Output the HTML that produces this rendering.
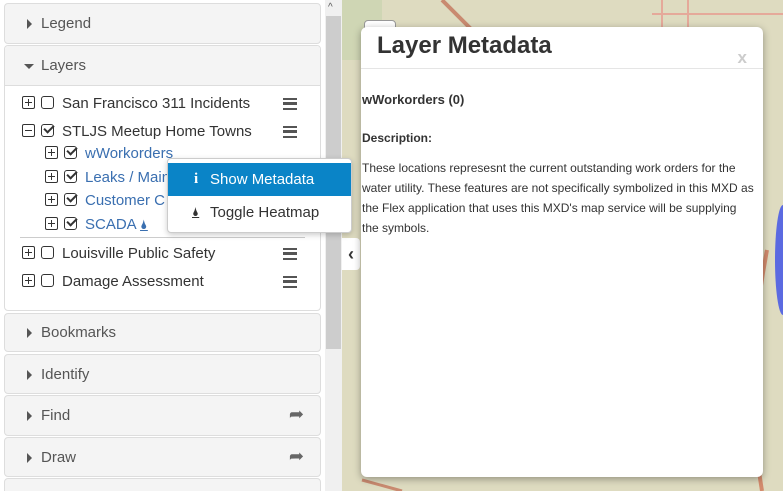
<!DOCTYPE html><html><head><style>
*{box-sizing:border-box}html,body{margin:0;width:783px;height:491px;overflow:hidden}body{font-family:"Liberation Sans",sans-serif;background:#fff;position:relative}
.p{position:absolute;left:4px;width:317px;border:1px solid #ddd;border-radius:4px;background:#f4f4f4;color:#555;font-size:15px}
.p .h{height:40px;line-height:40px;padding-left:36px;position:relative}
.tri{position:absolute;left:22px;top:15px;width:0;height:0;border-top:5px solid transparent;border-bottom:5px solid transparent;border-left:5px solid #555}
.down{position:absolute;left:19px;top:18px;border-left:5px solid transparent;border-right:5px solid transparent;border-top:5px solid #555}
.sh{position:absolute;right:16px;top:0px;line-height:36px;font-size:18px;color:#666}
.row{position:absolute;font-size:15px;color:#333;white-space:nowrap}
.pl{display:inline-block;width:13px;height:13px;border:1.5px solid #333;border-radius:2px;position:relative;vertical-align:-1px;margin-right:6px}
.pl:before{content:"";position:absolute;left:2px;right:2px;top:4.5px;height:1.5px;background:#333}
.pl.v:after{content:"";position:absolute;top:2px;bottom:2px;left:4.5px;width:1.5px;background:#333}
.cb{display:inline-block;width:13px;height:13px;border:1.5px solid #333;border-radius:3px;vertical-align:-1px;margin-right:8px;position:relative}
.cb.c:after{content:"";position:absolute;left:2px;top:0px;width:8px;height:4px;border-left:2.5px solid #333;border-bottom:2.5px solid #333;transform:rotate(-45deg)}
.ham{position:absolute;left:283px;width:14px;height:12px;border-top:2.5px solid #555;border-bottom:2.5px solid #555}
.ham:after{content:"";position:absolute;left:0;right:0;top:2.2px;height:2.5px;background:#555}
.blue{color:#3a6fb0}
</style></head><body>
<div style="position:absolute;left:342px;top:0;width:441px;height:491px;background:#dedbc0">
<svg width="441" height="491" style="position:absolute;left:0;top:0">
<rect x="0" y="0" width="40" height="60" fill="#cfd6b4"/>
<path d="M100 0 L140 40" stroke="#c98a70" stroke-width="4" fill="none"/>
<path d="M320 0 V30 M346 0 V30 M310 14 H441" stroke="#e5a99a" stroke-width="2" fill="none"/>
<path d="M425 250 C410 330 405 400 420 491" stroke="#d38b6d" stroke-width="4" fill="none"/>
<path d="M20 480 L60 491" stroke="#c98a70" stroke-width="3" fill="none"/>
<ellipse cx="441" cy="260" rx="8" ry="55" fill="#3a4de8" opacity=".8"/>
</svg>
<div style="position:absolute;left:327px;top:34px;font-size:10px;color:#555">Oslo Rd</div>
<div style="position:absolute;left:0;top:238px;width:18px;height:32px;background:#fff;border-radius:0 4px 4px 0;font-size:18px;font-weight:bold;color:#333;line-height:32px;text-align:center">‹</div>
<div style="position:absolute;left:22px;top:20px;width:32px;height:12px;background:#fff;border:1px solid #999;border-radius:4px"></div>
</div>
<div style="position:absolute;left:325px;top:0;width:17px;height:491px;background:#f0f0f0"></div>
<div style="position:absolute;left:326px;top:16px;width:15px;height:333px;background:#cdcdcd"></div>
<div style="position:absolute;left:328px;top:2px;font-size:10px;color:#555">^</div>
<div class="p" style="top:3px;height:41px"><div class="h"><span class="tri"></span>Legend</div></div>
<div class="p" style="top:45px;height:266px;background:#fff"><div class="h" style="background:#f4f4f4;border-bottom:1px solid #ddd;border-radius:4px 4px 0 0"><span class="down"></span>Layers</div></div>
<div class="row" style="left:22px;top:95px"><span class="pl v"></span><span class="cb"></span>San Francisco 311 Incidents</div><div class="ham" style="top:98px"></div>
<div class="row" style="left:22px;top:123px"><span class="pl"></span><span class="cb c"></span>STLJS Meetup Home Towns</div><div class="ham" style="top:126px"></div>
<div class="row blue" style="left:45px;top:145px"><span class="pl v"></span><span class="cb c"></span>wWorkorders</div>
<div class="row blue" style="left:45px;top:169px"><span class="pl v"></span><span class="cb c"></span>Leaks / Main</div>
<div class="row blue" style="left:45px;top:192px"><span class="pl v"></span><span class="cb c"></span>Customer C</div>
<div class="row blue" style="left:45px;top:216px"><span class="pl v"></span><span class="cb c"></span>SCADA <span style="text-decoration:underline;font-size:13px">🌢</span></div>
<div style="position:absolute;left:20px;top:237px;width:285px;height:1px;background:#ccc"></div>
<div class="row" style="left:22px;top:245px"><span class="pl v"></span><span class="cb"></span>Louisville Public Safety</div><div class="ham" style="top:248px"></div>
<div class="row" style="left:22px;top:273px"><span class="pl v"></span><span class="cb"></span>Damage Assessment</div><div class="ham" style="top:276px"></div>
<div style="position:absolute;left:167px;top:158px;width:185px;height:75px;background:#fff;border:1px solid #ccc;border-radius:4px;box-shadow:0 2px 6px rgba(0,0,0,.2);font-size:15px">
<div style="margin-top:4px;height:33px;background:#0a84c7;color:#fff;line-height:33px;padding-left:42px;position:relative"><span style="position:absolute;left:26px;font-weight:bold;font-family:'Liberation Serif',serif">i</span>Show Metadata</div>
<div style="height:33px;color:#333;line-height:33px;padding-left:42px;position:relative"><span style="position:absolute;left:24px;font-size:12px;text-decoration:underline">🌢</span>Toggle Heatmap</div>
</div>
<div class="p" style="top:313px;height:39px"><div class="h" style="height:38px;line-height:38px"><span class="tri" style="top:14px"></span>Bookmarks</div></div>
<div class="p" style="top:354px;height:40px"><div class="h"><span class="tri"></span>Identify</div></div>
<div class="p" style="top:395px;height:41px"><div class="h"><span class="tri"></span>Find<span class="sh">➦</span></div></div>
<div class="p" style="top:437px;height:40px"><div class="h"><span class="tri"></span>Draw<span class="sh">➦</span></div></div>
<div class="p" style="top:478px;height:30px"></div>
<div style="position:absolute;left:361px;top:27px;width:402px;height:450px;background:#fff;border-radius:6px;box-shadow:0 2px 8px rgba(0,0,0,.35)">
<div style="height:42px;border-bottom:1px solid #e5e5e5;padding-left:16px;font-size:24px;font-weight:bold;color:#333;line-height:38px">Layer Metadata<span style="position:absolute;right:16px;top:12px;font-size:17px;color:#ccc">x</span></div>
<div style="position:absolute;left:1px;top:65px;font-size:13px;font-weight:bold;color:#333">wWorkorders (0)</div>
<div style="position:absolute;left:1px;top:104px;font-size:12px;font-weight:bold;color:#333">Description:</div>
<div style="position:absolute;left:1px;top:131px;width:392px;font-size:12px;line-height:20px;color:#333">These locations represesnt the current outstanding work orders for the water utility. These features are not specifically symbolized in this MXD as the Flex application that uses this MXD's map service will be supplying the symbols.</div>
</div>
</body></html>
